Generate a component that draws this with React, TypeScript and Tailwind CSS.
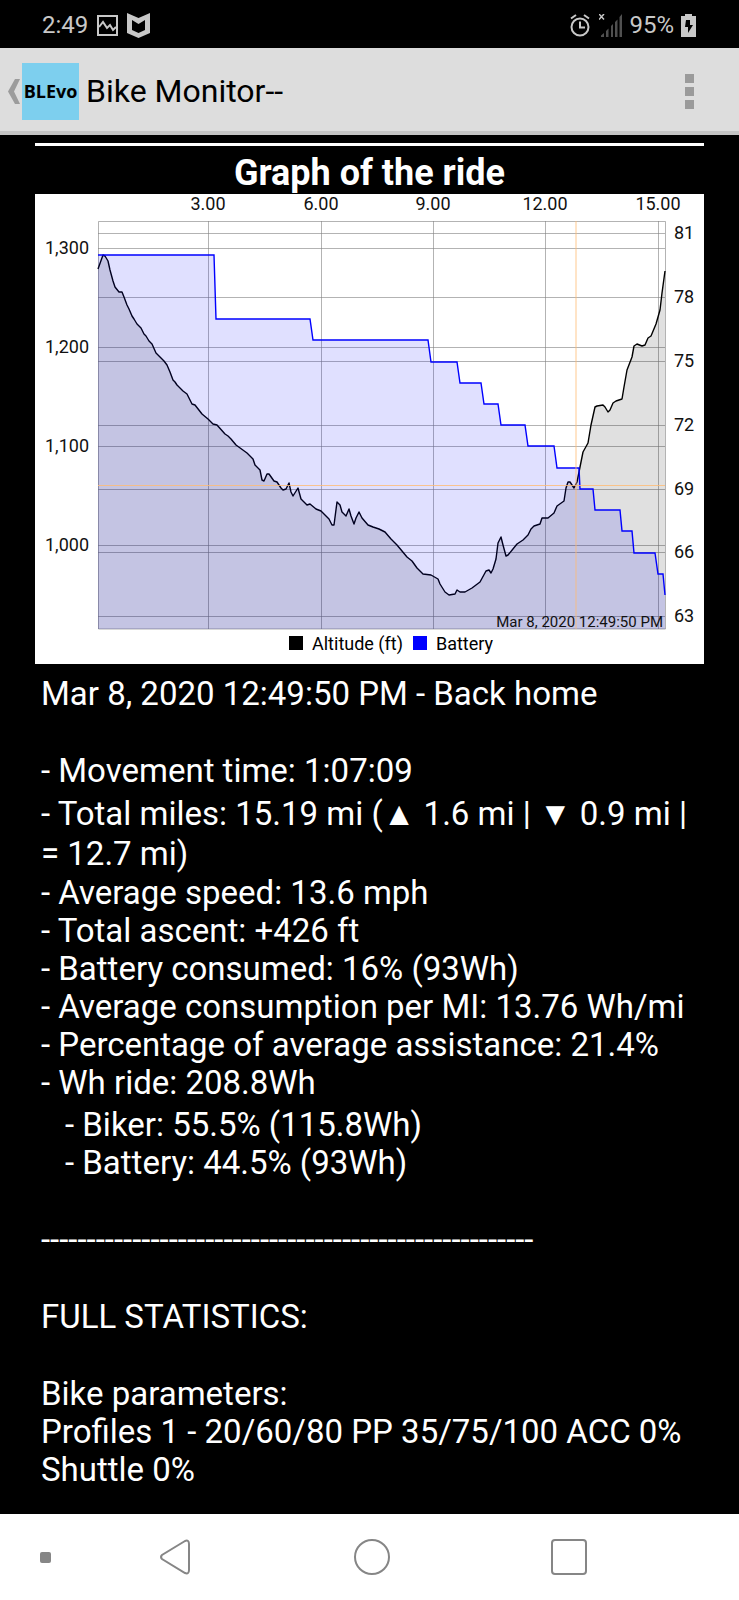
import React from "react";

const altitude =
  "63,75 68,61 70,62 73,67 75,76 78,87 80,93 84,98 87,98 89,103 92,111 94,115 97,122 99,125 102,130 106,134 109,140 111,142 114,147 117,150 121,159 125,163 129,167 132,171 135,178 138,186 140,188 142,191 148,197 152,200 157,210 160,211 167,220 173,225 178,230 182,231 190,240 193,242 196,245 201,251 212,259 218,265 220,271 225,276 227,286 229,287 232,280 234,280 239,287 242,288 246,294 248,296 251,295 254,289 256,298 258,302 263,294 266,305 272,311 275,310 281,315 286,317 294,325 297,331 299,331 302,308 305,311 307,318 311,322 314,315 316,322 319,330 321,324 324,318 327,324 333,331 338,333 344,335 350,338 356,345 362,351 372,363 377,367 382,374 388,380 396,381 403,385 405,390 410,398 414,401 420,400 422,396 425,398 430,398 437,394 445,388 451,377 454,376 456,379 458,375 461,365 463,349 466,343 468,351 471,362 473,361 482,350 488,346 493,341 496,335 499,332 505,330 507,324 513,324 519,319 522,312 529,307 531,294 533,288 535,288 539,294 542,288 544,278 548,258 553,249 556,231 560,213 562,212 568,211 570,213 573,218 575,216 578,209 581,207 587,205 589,193 592,176 597,163 599,152 602,150 607,152 610,151 613,144 616,142 621,130 625,116 627,99 630,77";

const battery =
  "63,61 179,61 181,125 275,125 278,146 393,146 396,168 422,168 425,189 446,189 449,210 463,210 466,231 490,231 493,252 519,252 522,274 544,274 545,295 558,295 560,316 585,316 587,337 597,337 599,359 620,359 623,380 628,380 630,401";

const distances = [
  { x: 173, label: "3.00" },
  { x: 286, label: "6.00" },
  { x: 398, label: "9.00" },
  { x: 510, label: "12.00" },
  { x: 623, label: "15.00" },
];

const heights = [
  { y: 54, label: "1,300" },
  { y: 153, label: "1,200" },
  { y: 252, label: "1,100" },
  { y: 351, label: "1,000" },
];

const charges = [
  { y: 39, label: "81" },
  { y: 103, label: "78" },
  { y: 167, label: "75" },
  { y: 231, label: "72" },
  { y: 295, label: "69" },
  { y: 358, label: "66" },
  { y: 422, label: "63" },
];

function StatusBar() {
  return (
    <div className="flex h-12 items-center justify-between bg-black pl-[42px] pr-[43px] text-2xl text-[#c8c8c8]">
      <div className="flex items-center gap-[9px] pt-[2px]">
        <span>2:49</span>
        <svg className="h-[21px] w-[21px]" viewBox="0 0 21 21" fill="none" stroke="currentColor" strokeWidth="2">
          <path d="M1 1h19v19H1z" />
          <path d="M2 12l4-5 4 6 3-3 3 5 3-3" />
        </svg>
        <svg className="h-[25px] w-[23px]" viewBox="0 0 23 25" fill="currentColor" fillRule="evenodd">
          <path d="M0 0l11.500 5L23 0v20l-11.500 5L0 20zM5 7v10l6.500 3 6.500-3V7l-6.500 4z" />
        </svg>
      </div>
      <div className="flex items-center gap-[7px] pt-[2px]">
        <svg className="mr-[2px] h-[23px] w-5" viewBox="0 0 20 23" fill="none" stroke="currentColor" strokeWidth="2">
          <circle cx="10" cy="13" r="8.500" />
          <path d="M10 7.500v6h5M1 4.500l5-3.500M19 4.500L14 1" />
        </svg>
        <svg className="h-[23px] w-[23px]" viewBox="0 0 23 23">
          <path
            d="M2 23v-1.500L5 19v4zM7 23v-6l2.500-2.500V23zM12 23V12l2-2v13zM16 23V8l2.500-2.500V23zM20.500 23V3L23 0v23z"
            fill="#505050"
          />
          <path d="M0 0l5 5.500M5 0L0 5.500" stroke="currentColor" strokeWidth="1.500" />
        </svg>
        <span>95%</span>
        <svg className="h-[23px] w-[15px]" viewBox="0 0 15 23" fill="currentColor" fillRule="evenodd">
          <path d="M4 0h7v2h4v21H0V2h4zM5 6L4 13h3v6l5-8H9V6z" />
        </svg>
      </div>
    </div>
  );
}

function Header() {
  return (
    <header className="flex h-[87px] items-center border-b-4 border-[#c4c4c4] bg-[#dddddd] pl-2 pr-[45px] pt-[3px]">
      <a href="#" aria-label="Back" className="flex items-center">
        <svg className="h-[25px] w-[14px]" viewBox="0 0 14 25" fill="#9c9c9c">
          <path d="M7 0h5L6 12.500 12 25H7L0 12.500z" />
        </svg>
        <span className="flex h-[57px] w-[57px] items-center justify-center bg-[#7dcfee] font-['Open_Sans',sans-serif] text-[18px] font-bold text-black">
          BLEvo
        </span>
      </a>
      <h1 className="ml-[7px] flex-1 text-[32px] text-black">Bike Monitor--</h1>
      <button type="button" aria-label="Menu" className="flex flex-col gap-1">
        <span className="h-[9px] w-[9px] bg-[#9a9a9a]"></span>
        <span className="h-[9px] w-[9px] bg-[#9a9a9a]"></span>
        <span className="h-[9px] w-[9px] bg-[#9a9a9a]"></span>
      </button>
    </header>
  );
}

function RideChart() {
  return (
    <div className="bg-white pb-2 text-black">
      <svg className="block w-full" viewBox="0 0 669 436" fontSize="18" fill="#111">
        <g stroke="#808080" strokeOpacity="0.6">
          <path d="M63.500 27.500h567V435h-567z" fill="none" />
          {distances.map((d) => (
            <line key={d.label} x1={d.x + 0.5} x2={d.x + 0.5} y1="27" y2="435" />
          ))}
          {charges.map((c) => (
            <line key={c.label} x1="63" x2="630" y1={c.y + 0.5} y2={c.y + 0.5} />
          ))}
          {heights.map((h) => (
            <line key={h.label} x1="63" x2="630" y1={h.y + 0.5} y2={h.y + 0.5} />
          ))}
        </g>
        <polygon points={`63,435 ${altitude} 630,435`} fillOpacity="0.12" fill="#000" />
        <polyline points={altitude} fill="none" stroke="#000" strokeWidth="1.4" strokeLinejoin="round" />
        <polygon points={`63,435 ${battery} 630,435`} fillOpacity="0.12" fill="#00f" />
        <polyline points={battery} fill="none" stroke="#00f" strokeWidth="1.4" />
        <path d="M541 27v408M63 291.500h567" stroke="#ffbb73" strokeOpacity="0.8" />
        {distances.map((d) => (
          <text key={d.label} x={d.x} y="16" textAnchor="middle">
            {d.label}
          </text>
        ))}
        {heights.map((h) => (
          <text key={h.label} x="54" y={h.y + 6} textAnchor="end">
            {h.label}
          </text>
        ))}
        {charges.map((c) => (
          <text key={c.label} x="639" y={c.y + 6}>
            {c.label}
          </text>
        ))}
        <text x="628" y="433" textAnchor="end" fontSize="15">
          Mar 8, 2020 12:49:50 PM
        </text>
      </svg>
      <div className="flex h-[26px] items-center pl-[254px] text-[18px]">
        <span className="mr-[9px] h-[14px] w-[14px] bg-black"></span>
        Altitude (ft)
        <span className="ml-[10px] mr-[9px] h-[14px] w-[14px] bg-[#0000ff]"></span>
        Battery
      </div>
    </div>
  );
}

function Summary() {
  return (
    <div className="px-[6px] pt-[11px] text-[33px] leading-[38px]">
      <p>Mar 8, 2020 12:49:50 PM - Back home</p>
      <ul className="mt-[39px]">
        <li>- Movement time: 1:07:09</li>
        <li className="pt-1 leading-10">- Total miles: 15.19 mi (▲ 1.6 mi | ▼ 0.9 mi | = 12.7 mi)</li>
        <li>- Average speed: 13.6 mph</li>
        <li>- Total ascent: +426 ft</li>
        <li>- Battery consumed: 16% (93Wh)</li>
        <li>- Average consumption per MI: 13.76 Wh/mi</li>
        <li>- Percentage of average assistance: 21.4%</li>
        <li>
          - Wh ride: 208.8Wh
          <ul className="pl-6 pt-1">
            <li>- Biker: 55.5% (115.8Wh)</li>
            <li>- Battery: 44.5% (93Wh)</li>
          </ul>
        </li>
      </ul>
      <p className="mt-[39px]">------------------------------------------------------</p>
      <h3 className="mt-[39px]">FULL STATISTICS:</h3>
      <p className="mt-[39px]">Bike parameters:</p>
      <p>Profiles 1 - 20/60/80 PP 35/75/100 ACC 0% Shuttle 0%</p>
    </div>
  );
}

function NavBar() {
  return (
    <nav className="flex h-[86px] items-center bg-white text-[#868686]">
      <button type="button" aria-label="Hide bar" className="flex w-[77px] justify-center pl-[14px]">
        <span className="h-[11px] w-[11px] rounded-[2px] bg-[#868686]"></span>
      </button>
      <button type="button" aria-label="Back" className="flex flex-1 justify-center">
        <svg className="h-9 w-8" viewBox="0 0 32 36" fill="none" stroke="currentColor" strokeWidth="2">
          <path d="M26 2L3 16q-2 2 0 4l23 14q4 1.500 4-3V5q0-4.500-4-3z" />
        </svg>
      </button>
      <button type="button" aria-label="Home" className="flex flex-1 justify-center">
        <span className="h-9 w-9 rounded-full border-2 border-[#868686]"></span>
      </button>
      <button type="button" aria-label="Recent apps" className="flex flex-1 justify-center">
        <span className="h-9 w-9 rounded border-2 border-[#868686]"></span>
      </button>
      <div className="w-[72px]"></div>
    </nav>
  );
}

function App() {
  return (
    <div className="flex min-h-screen flex-col bg-black font-['Roboto',sans-serif] text-white">
      <StatusBar />
      <Header />
      <main className="flex-1 px-[35px] pt-2">
        <h2 className="border-t-[3px] border-white pt-[7px] text-center text-[36px] font-bold leading-[41px]">
          Graph of the ride
        </h2>
        <RideChart />
        <Summary />
      </main>
      <NavBar />
    </div>
  );
}

export default App;
